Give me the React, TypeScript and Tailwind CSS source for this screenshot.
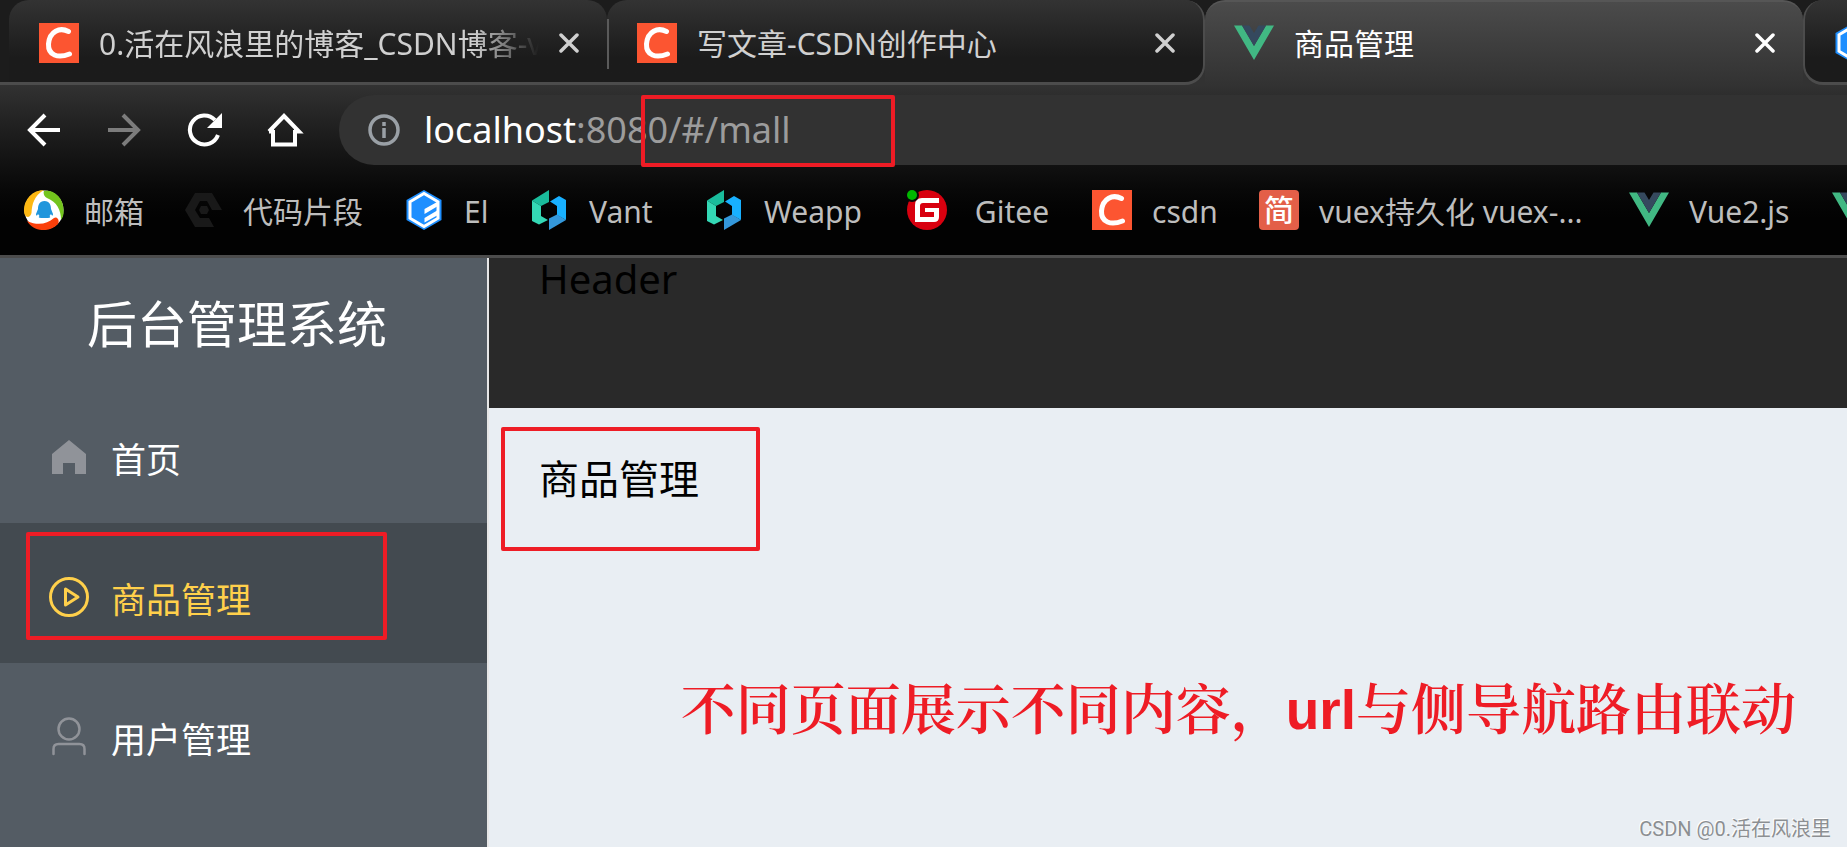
import type { ReactNode } from "react";
import clsx from "clsx";

const CsdnIcon = () => (
  <svg viewBox="0 0 40 40" className="size-10 shrink-0">
    <rect width="40" height="40" fill="#fc5531" />
    <path
      d="M29.500 8.500C21 4 10.500 8 9.500 21C9 32.500 19 35.500 30.500 31"
      fill="none"
      stroke="#fff"
      strokeWidth="5"
      strokeLinecap="round"
    />
  </svg>
);

const VueIcon = () => (
  <svg viewBox="0 0 40 40" className="size-10 shrink-0">
    <path d="M0 2.500H8L20 23L32 2.500H40L20 37Z" fill="#41b883" />
    <path d="M8 2.500H15.500L20 10L24.500 2.500H32L20 23Z" fill="#35495e" />
  </svg>
);

const ElementIcon = () => (
  <svg viewBox="0 0 40 40" className="size-10 shrink-0">
    <path d="M20 0L37.500 10V30L20 40L2.500 30V10Z" fill="#1e8fff" />
    <path d="M20 3.500L34 11.800V28.200L20 36.500L6 28.200V11.800Z" fill="none" stroke="#fff" strokeWidth="3" />
    <path d="M20.500 19L34 11.500V16L20.500 24ZM20.500 28L34 20V25L20.500 32.500Z" fill="#fff" />
  </svg>
);

const VantIcon = () => (
  <svg viewBox="0 0 40 40" className="size-10 shrink-0">
    <path d="M3 10.500L20 0V12L12 16Z" fill="#1abc9c" />
    <path d="M3 10.500L12 16V26L19 30L10 34.500L3 31Z" fill="#34d8b5" />
    <path d="M21 11.500L30 6L37 10V30L28 25V16Z" fill="#18b0ff" />
    <path d="M20 28.500L28 24.500L37 30L20 40Z" fill="#3498db" />
  </svg>
);

const MailIcon = () => (
  <svg viewBox="0 0 40 40" className="size-10 shrink-0">
    <circle cx="20" cy="20" r="19.500" fill="#fff" />
    <path d="M20 0A20 20 0 0 0 0 21C0 28 6 29 7.500 23C8 14 10 6 20 0Z" fill="#fdb813" />
    <path d="M20 1C29-1 41 7 39.500 24C39 27 38 28 37 30C37 20 33 12 23 8C20 7 19 3 20 1Z" fill="#73c41d" />
    <path d="M3 31C14 36 23 34 30 28C33 26 36 30 34 34C25 43 10 42 3 31Z" fill="#fb3f0a" />
    <path d="M20.500 11C15.500 11 14 15 14 19L12 24C12 26 13 26 14 24L15.500 26C14 27 15 28 17 28H24C26 28 27 27 25.500 26L27 24C28 26 29 26 29 24L27 19C27 15 25.500 11 20.500 11Z" fill="#2196dc" />
  </svg>
);

const SnippetIcon = () => (
  <svg viewBox="0 0 40 40" className="size-10 shrink-0">
    <path d="M12 3H29L39 20H29L24 11H17L12 20L17 28H26L31 37H12L2 20Z" fill="#191919" />
    <path d="M18 16H24L26 20L24 24H18L16 20Z" fill="#191919" />
  </svg>
);

const GiteeIcon = () => (
  <svg viewBox="0 0 40 40" className="size-10 shrink-0">
    <circle cx="20" cy="20" r="20" fill="#d8000f" />
    <path
      d="M32 8H15Q8 8 8 15V32H27Q32 32 32 27V18H18V22H27V27H13V16Q13 13 16 13H32Z"
      fill="#fff"
    />
    <circle cx="5" cy="5" r="7" fill="#080808" />
    <circle cx="5" cy="5" r="5" fill="#00b800" />
  </svg>
);

const JianIcon = () => (
  <span className="flex size-10 shrink-0 items-center justify-center rounded-sm bg-[#e35f48] text-[30px] leading-none font-medium text-white">
    简
  </span>
);

const CloseIcon = () => (
  <svg viewBox="0 0 20 20" className="size-5" fill="none" stroke="currentColor" strokeWidth="3.500" strokeLinecap="round">
    <path d="M2 2L18 18M18 2L2 18" />
  </svg>
);

interface TabProps {
  icon: ReactNode;
  title: string;
  className: string;
  faded?: boolean;
}

function Tab({ icon, title, className, faded }: TabProps) {
  return (
    <div className={clsx("flex h-[85px] w-[598px] shrink-0 items-start rounded-t-[20px] pr-7", className)}>
      {icon}
      <span
        className={clsx(
          "ml-5 min-w-0 flex-1 overflow-hidden text-[30px] leading-[42px] whitespace-nowrap",
          faded && "mask-r-from-85%",
        )}
      >
        {title}
      </span>
      <button type="button" aria-label="关闭" className="ml-5 flex h-10 items-center">
        <CloseIcon />
      </button>
    </div>
  );
}

const idleTab = "border-b-[3px] border-[#4c4c4c] bg-linear-to-b from-[#333] to-[#1b1b1b] to-70% pt-[23px] text-[#d0d0d0]";

const bookmarks = [
  { icon: <MailIcon />, label: "邮箱", width: "w-[159px]" },
  { icon: <SnippetIcon />, label: "代码片段", width: "w-[221px]" },
  { icon: <ElementIcon />, label: "El", width: "w-[125px]" },
  { icon: <VantIcon />, label: "Vant", width: "w-[175px]" },
  { icon: <VantIcon />, label: "Weapp", width: "w-[203px]" },
  { icon: <GiteeIcon />, label: " Gitee", width: "w-[185px]" },
  { icon: <CsdnIcon />, label: "csdn", width: "w-[167px]" },
  { icon: <JianIcon />, label: "vuex持久化 vuex-...", width: "w-[370px]" },
  { icon: <VueIcon />, label: "Vue2.js", width: "w-[203px]" },
  { icon: <VueIcon />, label: "", width: "w-10" },
];

function Browser() {
  return (
    <div className="border-b-[3px] border-[#4c4c4c] bg-black">
      {/* Tabs */}
      <div className="flex h-[85px] overflow-hidden bg-linear-to-b from-[#1c1c1c] from-50% to-[#323232] to-50%">
        <div className="w-[9px] shrink-0 border-b-[3px] border-[#4c4c4c] bg-[#1c1c1c]" />
        <Tab icon={<CsdnIcon />} title="0.活在风浪里的博客_CSDN博客-v" className={clsx(idleTab, "pl-[30px]")} faded />
        <div className="z-10 mt-[19px] -mr-0.5 h-[50px] w-0.5 shrink-0 bg-[#5a5a5a]" />
        <Tab
          icon={<CsdnIcon />}
          title="写文章-CSDN创作中心"
          className={clsx(idleTab, "rounded-br-[20px] border-r-2 pl-[30px]")}
        />
        <Tab
          icon={<VueIcon />}
          title="商品管理"
          className="border-t-2 border-[#565656] bg-linear-to-b from-[#4b4b4b] to-[#323232] pt-[21px] pl-[29px] text-white"
        />
        <Tab icon={<ElementIcon />} title="" className={clsx(idleTab, "rounded-bl-[20px] border-l-2 pl-[28px]")} />
      </div>

      {/* Toolbar */}
      <div className="flex h-20 items-center bg-linear-to-b from-[#323232] to-[#111] pt-2.5">
        <div className="flex w-[339px] shrink-0 gap-10 pl-6 text-white">
          <button type="button" aria-label="后退">
            <svg viewBox="0 0 40 40" className="size-10" fill="none" stroke="currentColor" strokeWidth="4">
              <path d="M36 20H7M21 5L6 20L21 35" />
            </svg>
          </button>
          <button type="button" aria-label="前进" className="text-[#7c7c7c]">
            <svg viewBox="0 0 40 40" className="size-10" fill="none" stroke="currentColor" strokeWidth="4">
              <path d="M4 20H33M19 5L34 20L19 35" />
            </svg>
          </button>
          <button type="button" aria-label="刷新">
            <svg viewBox="0 0 40 40" className="size-10" fill="none" stroke="currentColor" strokeWidth="4">
              <path d="M34 25A14.500 14.500 0 1 1 31 10" />
              <path d="M38 3V18H23Z" fill="currentColor" stroke="none" />
            </svg>
          </button>
          <button type="button" aria-label="主页">
            <svg viewBox="0 0 40 40" className="size-10" fill="none" stroke="currentColor" strokeWidth="4">
              <path d="M9 20V34.500H31V20M5 21.500L20 6L35 21.500H30M5 21.500H10" />
            </svg>
          </button>
        </div>
        <div className="relative flex h-[70px] min-w-0 flex-1 items-center rounded-l-full bg-[#323232] pl-[29px]">
          <svg viewBox="0 0 32 32" className="size-8 shrink-0" fill="none" stroke="#9aa0a6" strokeWidth="3.500">
            <circle cx="16" cy="16" r="14" />
            <path d="M16 14V24M16 8V12" />
          </svg>
          <span className="ml-6 text-[36px] leading-[48px] text-[#9c9c9c]">
            <span className="text-white">localhost</span>:8080/#/mall
          </span>
          <div className="absolute top-0 left-[302px] h-[72px] w-[254px] rounded-xs border-4 border-[#ee1c25]" />
        </div>
      </div>

      {/* Bookmarks */}
      <div className="flex h-[90px] items-center overflow-hidden bg-linear-to-b from-[#111] to-[#020202] to-60% pl-6">
        {bookmarks.map(({ icon, label, width }, i) => (
          <a key={i} href="#" className={clsx("flex shrink-0 items-center", width)}>
            {icon}
            <span className="ml-5 pt-1 text-[30px] leading-10 whitespace-pre text-[#bdbdbd]">{label}</span>
          </a>
        ))}
      </div>
    </div>
  );
}

function Sidebar() {
  return (
    <aside className="w-[489px] shrink-0 border-r-2 border-[#e6e6e6] bg-[#545c64] text-white">
      <h1 className="h-[125px] pt-9 pr-[13px] text-center text-[50px] leading-[60px]">后台管理系统</h1>
      <nav className="text-[35px]">
        <a href="#/" className="flex h-[140px] items-center gap-[22px] pt-2 pl-[49px]">
          <svg viewBox="0 0 40 40" className="size-10" fill="#909399">
            <path d="M20 3L37 17V37H26V26H14V37H3V17Z" />
          </svg>
          <span className="pt-1.5">首页</span>
        </a>
        <a
          href="#/mall"
          className="relative flex h-[140px] items-center gap-[22px] bg-[#434a50] pt-2 pl-[49px] text-[#ffd04b]"
        >
          <svg viewBox="0 0 40 40" className="size-10" fill="none" stroke="currentColor" strokeWidth="3" strokeLinejoin="round">
            <circle cx="20" cy="20" r="18.500" />
            <path d="M16.500 12V28L29 20Z" />
          </svg>
          <span className="pt-1.5">商品管理</span>
          <span className="absolute top-[9px] left-[26px] h-[108px] w-[361px] rounded-xs border-4 border-[#ee1c25]" />
        </a>
        <a href="#/user" className="flex h-[140px] items-center gap-[22px] pt-2 pl-[49px]">
          <svg viewBox="0 0 40 40" className="size-10" fill="none" stroke="#909399" strokeWidth="2.500" strokeLinecap="round">
            <circle cx="20" cy="12" r="10.500" />
            <path d="M4.500 37V32Q4.500 27 9.500 27H30.500Q35.500 27 35.500 32V37" />
          </svg>
          <span className="pt-1.5">用户管理</span>
        </a>
      </nav>
    </aside>
  );
}

export default function App() {
  return (
    <div className="flex min-h-screen flex-col overflow-hidden font-['Noto_Sans','Noto_Sans_CJK_SC',sans-serif]">
      <Browser />
      <div className="flex flex-1">
        <Sidebar />
        <div className="flex min-w-0 flex-1 flex-col bg-[#e9eef3] text-[40px] text-black">
          <header className="h-[150px] bg-[#292929] pl-[50px] leading-[42px]">Header</header>
          <main className="relative flex flex-1 flex-col">
            <div className="mt-[19px] ml-3 h-[124px] w-[259px] rounded-xs border-4 border-[#ee1c25] pt-[18px] pl-[34px] leading-[60px]">
              商品管理
            </div>
            <p className="mt-[115px] pr-[51px] text-right font-['Noto_Serif_CJK_SC','Noto_Sans_CJK_SC',serif] text-[55px] leading-[80px] font-semibold whitespace-nowrap text-[#ee1c25]">
              不同页面展示不同内容，
              <b className="font-['Liberation_Sans',sans-serif]">url</b>
              与侧导航路由联动
            </p>
            <p className="absolute right-4 bottom-1 font-['Roboto','Noto_Sans_CJK_SC',sans-serif] text-[20px] leading-7 text-[#8c8f92] text-shadow-[-1px_-1px_0_#fff]">
              CSDN @0.活在风浪里
            </p>
          </main>
        </div>
      </div>
    </div>
  );
}
